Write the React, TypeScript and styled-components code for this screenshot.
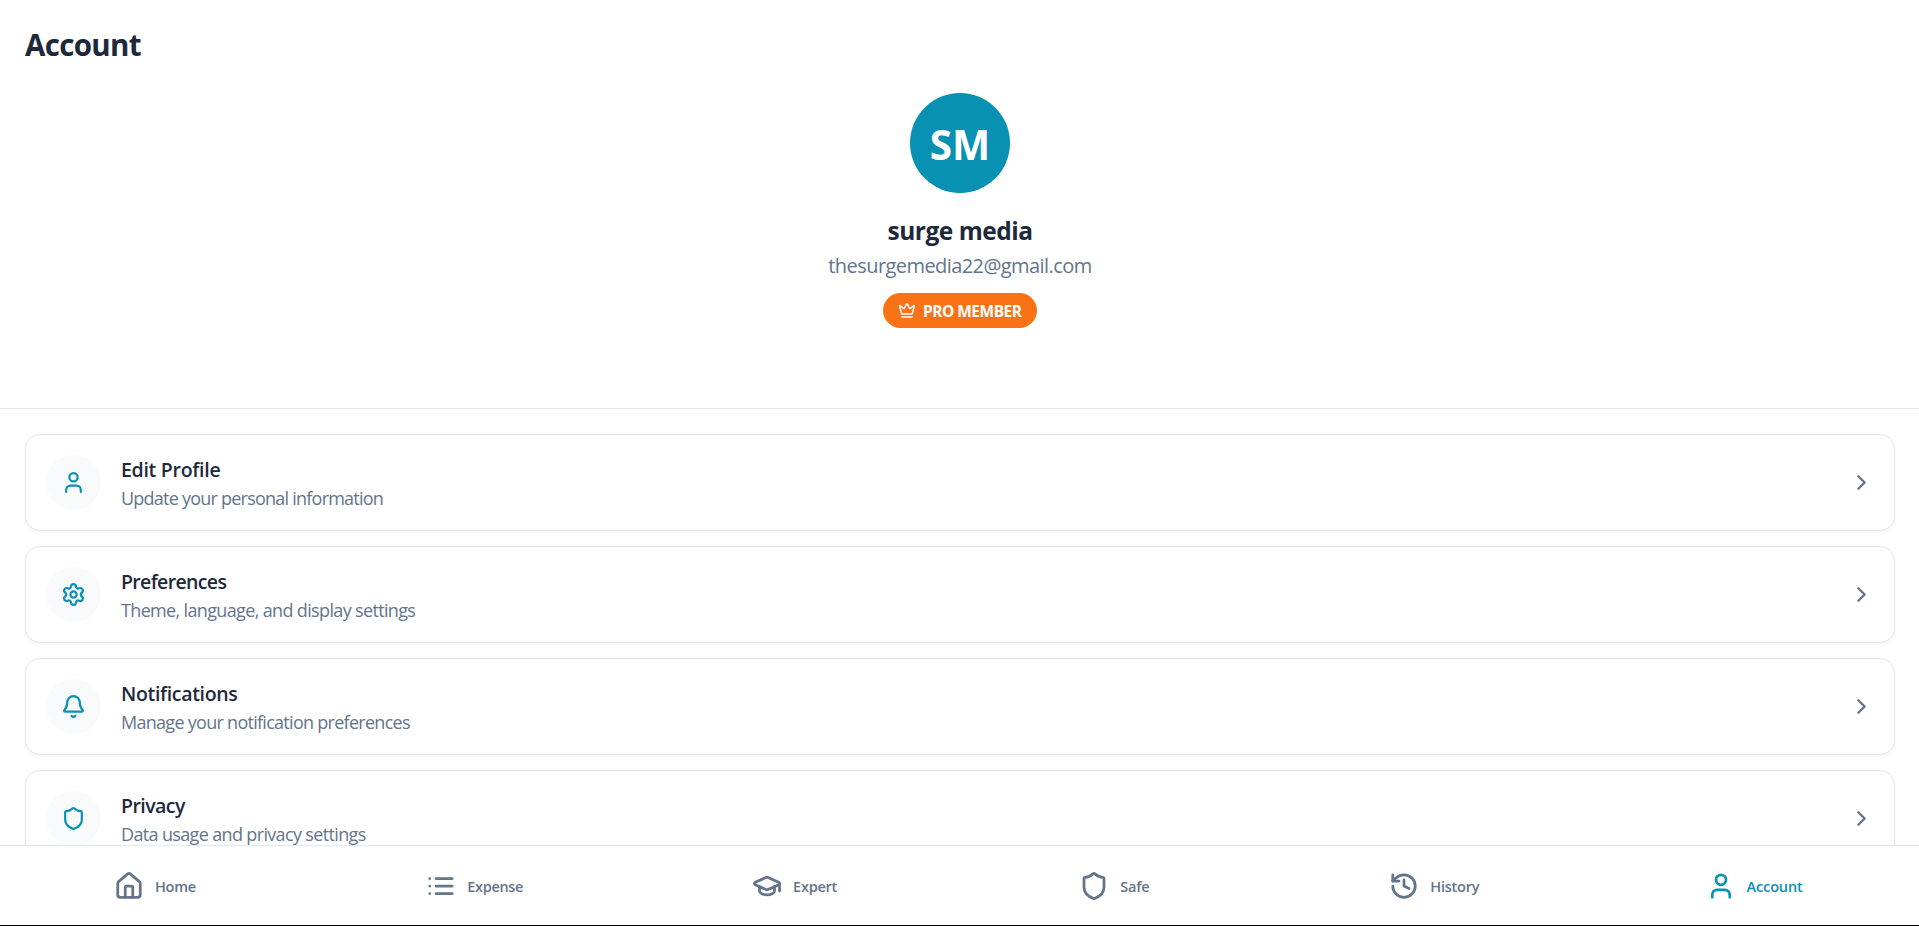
import styled, { createGlobalStyle } from "styled-components";
import {
  Bell,
  ChevronRight,
  Crown,
  GraduationCap,
  History,
  House,
  Settings,
  Shield,
  User,
} from "lucide-react";

const GlobalStyle = createGlobalStyle`
  * { box-sizing: border-box; }
  body {
    margin: 0;
    background: #fff;
    color: #1e293b;
    font-family: "Open Sans", "Noto Sans", sans-serif;
  }
`;

const Screen = styled.div`
  display: flex;
  flex-direction: column;
  height: 100vh;
  overflow: hidden;
  border-bottom: 1px solid #000;
`;

const Content = styled.main`
  flex: 1;
  min-height: 0;
  overflow: hidden;
`;

const ProfileHeader = styled.header`
  height: 409px;
  padding: 25px 25px 0;
  border-bottom: 1px solid #e2e8f0;
`;

const Text = styled.div<{ $track?: number }>`
  width: max-content;
  margin: 0;
  white-space: nowrap;
  letter-spacing: ${(p) => p.$track || 0}px;
`;

const PageTitle = styled(Text)`
  font-size: 29.5px;
  font-weight: 700;
  line-height: 39px;
`;

const Profile = styled.section`
  display: flex;
  flex-direction: column;
  align-items: center;
  margin-top: 29px;
`;

const Avatar = styled.div`
  display: flex;
  align-items: center;
  justify-content: center;
  width: 100px;
  height: 100px;
  border-radius: 50%;
  background: #0891b2;
  color: #fff;
`;

const Initials = styled(Text)`
  padding: 3px 0 0 1px;
  font-size: 40.5px;
  font-weight: 700;
  line-height: 54px;
`;

const Name = styled(Text)`
  margin-top: 21px;
  padding-left: 1px;
  font-size: 24.5px;
  font-weight: 700;
  line-height: 34px;
`;

const Email = styled(Text)`
  margin-top: 5px;
  padding-left: 1px;
  font-size: 20px;
  line-height: 26px;
  color: #64748b;
`;

const Badge = styled.div`
  display: flex;
  align-items: center;
  gap: 7.5px;
  width: 154px;
  height: 35px;
  margin-top: 14px;
  padding: 0 15px;
  border-radius: 18px;
  background: #f97316;
  color: #fff;
`;

const BadgeLabel = styled(Text)`
  padding-top: 1px;
  font-size: 15.5px;
  font-weight: 700;
`;

const Menu = styled.div`
  display: flex;
  flex-direction: column;
  gap: 15px;
  padding: 25px 24px 0 25px;
`;

const Card = styled.div`
  display: flex;
  flex-shrink: 0;
  align-items: center;
  height: 97px;
  padding: 0 20px;
  border: 1px solid #e2e8f0;
  border-radius: 15px;
  background: #fff;
  box-shadow: 0 1px 3px rgba(0, 0, 0, 0.05);
`;

const IconCircle = styled.div`
  display: flex;
  align-items: center;
  justify-content: center;
  width: 55px;
  height: 55px;
  margin-right: 20px;
  border-radius: 50%;
  background: #f8fafc;
  color: #0891b2;
`;

const CardText = styled.div`
  flex: 1;
  padding-top: 2px;
`;

const CardTitle = styled(Text)`
  font-size: 19.5px;
  font-weight: 600;
  line-height: 28px;
`;

const CardSubtitle = styled(Text)`
  margin-top: 1px;
  font-size: 18px;
  line-height: 27px;
  color: #64748b;
`;

const Chevron = styled(ChevronRight)`
  color: #64748b;
`;

const TabBar = styled.nav`
  display: grid;
  grid-template-columns: repeat(6, 1fr);
  height: 80px;
  border-top: 1px solid #e2e8f0;
`;

const Tab = styled.div<{ $active?: boolean }>`
  display: flex;
  align-items: center;
  justify-content: center;
  gap: 11px;
  padding-right: 10px;
  color: ${(p) => (p.$active ? "#0891b2" : "#64748b")};
`;

const TabLabel = styled(Text)`
  padding-top: 1px;
  font-size: 14.5px;
  font-weight: 600;
`;

const ListIcon = ({ size, strokeWidth }: { size: number; strokeWidth: number }) => (
  <svg
    width={size}
    height={size}
    viewBox="0 0 24 24"
    fill="none"
    stroke="currentColor"
    strokeWidth={strokeWidth}
    strokeLinecap="round"
  >
    <path d="M3 6h.01M3 12h.01M3 18h.01M8 6h13M8 12h13M8 18h13" />
  </svg>
);

const menuItems = [
  {
    icon: User,
    title: "Edit Profile",
    subtitle: "Update your personal information",
    titleTrack: -0.28,
    subtitleTrack: -0.77,
  },
  {
    icon: Settings,
    title: "Preferences",
    subtitle: "Theme, language, and display settings",
    titleTrack: -0.65,
    subtitleTrack: -0.65,
  },
  {
    icon: Bell,
    title: "Notifications",
    subtitle: "Manage your notification preferences",
    titleTrack: -0.33,
    subtitleTrack: -0.72,
  },
  {
    icon: Shield,
    title: "Privacy",
    subtitle: "Data usage and privacy settings",
    titleTrack: -0.55,
    subtitleTrack: -0.65,
  },
];

const tabs = [
  { icon: House, label: "Home", track: -0.25 },
  { icon: ListIcon, label: "Expense", track: -0.33 },
  { icon: GraduationCap, label: "Expert", track: -0.25 },
  { icon: Shield, label: "Safe", track: -0.2 },
  { icon: History, label: "History", track: -0.26 },
  { icon: User, label: "Account", track: -0.15, active: true },
];

const App = () => {
  return (
    <Screen>
      <GlobalStyle />
      <Content>
        <ProfileHeader>
          <PageTitle as="h1" $track={-0.65}>Account</PageTitle>
          <Profile>
            <Avatar>
              <Initials>SM</Initials>
            </Avatar>
            <Name $track={-0.5}>surge media</Name>
            <Email $track={-0.57}>thesurgemedia22@gmail.com</Email>
            <Badge>
              <Crown size={18.75} />
              <BadgeLabel $track={-0.5}>PRO MEMBER</BadgeLabel>
            </Badge>
          </Profile>
        </ProfileHeader>
        <Menu>
          {menuItems.map(({ icon: Icon, title, subtitle, titleTrack, subtitleTrack }) => (
            <Card key={title}>
              <IconCircle>
                <Icon size={25} strokeWidth={2.1} />
              </IconCircle>
              <CardText>
                <CardTitle $track={titleTrack}>{title}</CardTitle>
                <CardSubtitle $track={subtitleTrack}>{subtitle}</CardSubtitle>
              </CardText>
              <Chevron size={25} strokeWidth={2.25} />
            </Card>
          ))}
        </Menu>
      </Content>
      <TabBar>
        {tabs.map(({ icon: Icon, label, track, active }) => (
          <Tab key={label} $active={active}>
            <Icon size={30} strokeWidth={2.2} />
            <TabLabel $track={track}>{label}</TabLabel>
          </Tab>
        ))}
      </TabBar>
    </Screen>
  );
};

export default App;
